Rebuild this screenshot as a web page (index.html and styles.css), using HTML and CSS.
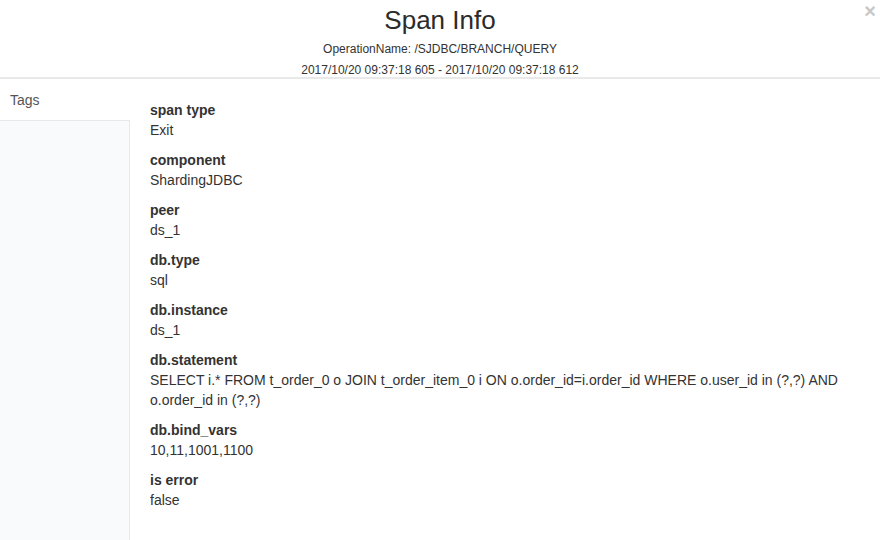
FILE: index.html
```html
<!DOCTYPE html>
<html>
<head>
<meta charset="utf-8">
<link rel="stylesheet" href="styles.css">
</head>
<body>
<div class="modal">
  <header class="head">
    <h1 class="title">Span Info</h1>
    <div class="sub first">OperationName: /SJDBC/BRANCH/QUERY</div>
    <div class="sub">2017/10/20 09:37:18 605 - 2017/10/20 09:37:18 612</div>
    <span class="close">&times;</span>
  </header>
  <div class="body">
    <aside class="side">
      <div class="tab">Tags</div>
      <div class="rest"></div>
    </aside>
    <main class="content">
      <div class="item"><div class="k">span type</div><div class="v">Exit</div></div>
      <div class="item"><div class="k">component</div><div class="v">ShardingJDBC</div></div>
      <div class="item"><div class="k">peer</div><div class="v">ds_1</div></div>
      <div class="item"><div class="k">db.type</div><div class="v">sql</div></div>
      <div class="item"><div class="k">db.instance</div><div class="v">ds_1</div></div>
      <div class="item"><div class="k">db.statement</div><div class="v">SELECT i.* FROM t_order_0 o JOIN t_order_item_0 i ON o.order_id=i.order_id WHERE o.user_id in (?,?) AND o.order_id in (?,?)</div></div>
      <div class="item"><div class="k">db.bind_vars</div><div class="v">10,11,1001,1100</div></div>
      <div class="item"><div class="k">is error</div><div class="v">false</div></div>
    </main>
  </div>
</div>
</body>
</html>
```
FILE: styles.css
```css
html, body { margin: 0; padding: 0; background: #fff; }
body { font-family: "Liberation Sans", Arial, sans-serif; color: #333; width: 880px; height: 540px; overflow: hidden; }
.modal { display: flex; flex-direction: column; height: 540px; }
.head { position: relative; text-align: center; padding-top: 5px; height: 72px; border-bottom: 2px solid #e9e9e9; }
.title { margin: 0; font-size: 26px; font-weight: normal; line-height: 30px; color: #2b2b2b; }
.sub { font-size: 12px; line-height: 21px; color: #333; }
.sub.first { margin-top: 4px; }
.close { position: absolute; right: 4px; top: 0; font-size: 20px; line-height: 22px; color: #c8c8c8; font-weight: bold; }
.body { display: flex; flex: 1; }
.side { width: 130px; display: flex; flex-direction: column; }
.tab { height: 41px; line-height: 42px; padding-left: 10px; font-size: 14px; color: #555; }
.rest { flex: 1; background: #f9fafb; border-top: 1px solid #e8e8e8; border-right: 1px solid #e8e8e8; }
.content { flex: 1; padding: 21px 36px 0 20px; }
.item { margin-bottom: 10px; font-size: 14px; line-height: 20px; }
.k { font-weight: bold; }
```
